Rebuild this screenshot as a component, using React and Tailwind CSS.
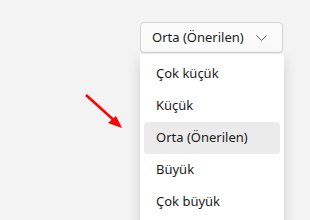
const OPTIONS = ["Çok küçük", "Küçük", "Orta (Önerilen)", "Büyük", "Çok büyük"];

export default function App() {
  const selected = "Orta (Önerilen)";

  return (
    <div
      className="relative w-[310px] h-[220px] overflow-hidden bg-[#f3f3f3] text-[#1b1b1b]"
      style={{ fontFamily: '"Noto Sans", "Open Sans", sans-serif' }}
    >
      <div className="pt-[22px] pl-[140px]">
        <button className="flex items-center justify-between w-[143px] h-[31px] pl-[11px] pr-[15px] bg-[#fbfbfb] border border-[#d1d1d1] rounded-[4px] text-[13px]">
          <span>{selected}</span>
          <svg width="11" height="6" viewBox="0 0 11 6" fill="none">
            <path d="M0.5 0.5L5.5 5.5L10.5 0.5" stroke="#5f5f5f" strokeWidth="1" />
          </svg>
        </button>
      </div>

      <ul className="absolute left-[140px] top-[54px] w-[144px] h-[180px] bg-white pt-[4px] px-[4px] shadow-[0_4px_12px_rgba(0,0,0,0.14)]">
        {OPTIONS.map((o) => (
          <li
            key={o}
            className={`flex items-center h-[32px] pl-[12px] rounded-[4px] text-[13px] ${
              o === selected ? "bg-[#ebebeb]" : ""
            }`}
          >
            {o}
          </li>
        ))}
      </ul>

      <svg
        className="absolute left-[80px] top-[90px]"
        width="50"
        height="45"
        viewBox="0 0 50 45"
      >
        <line x1="6" y1="5" x2="37" y2="33" stroke="#ff0000" strokeWidth="2.5" />
        <polygon points="42,38 28,33 36,26" fill="#ff0000" />
      </svg>
    </div>
  );
}
